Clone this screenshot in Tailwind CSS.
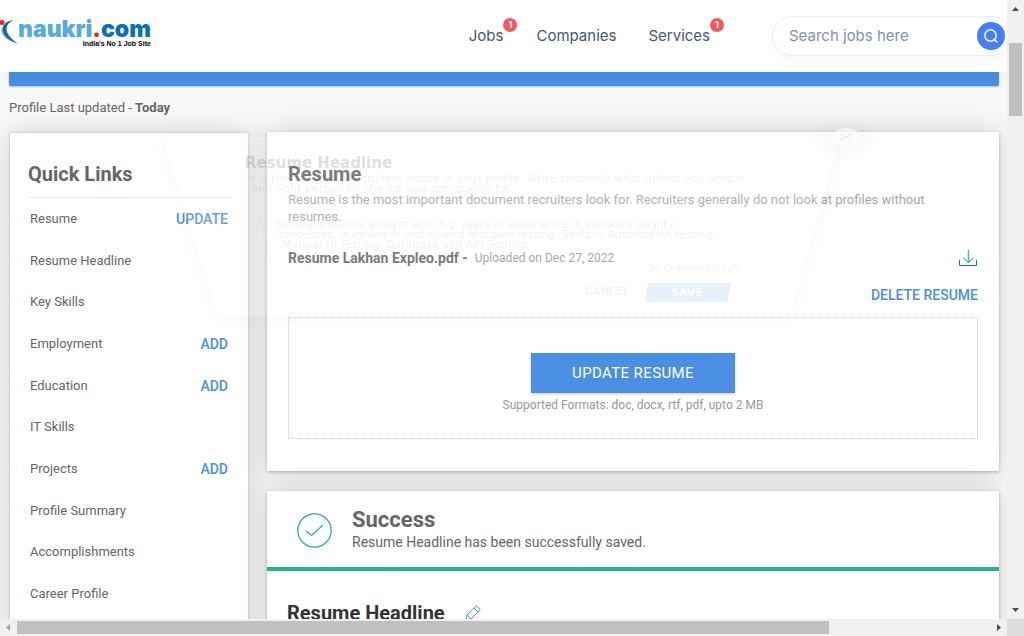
<!DOCTYPE html>
<html lang="en">
<head>
<meta charset="utf-8">
<meta name="viewport" content="width=device-width, initial-scale=1">
<title>Profile | Naukri.com</title>
<script src="https://cdn.jsdelivr.net/npm/@tailwindcss/browser@4"></script>
</head>
<body class="h-screen overflow-hidden bg-[#f8f8f8] font-['Roboto',sans-serif] text-[13px] text-[#666]">
<div class="grid h-screen grid-cols-[minmax(0,1fr)_17px] grid-rows-[minmax(0,1fr)_17px]">

  <div class="relative flex min-w-0 flex-col overflow-hidden">
    <header class="relative z-10 flex h-[72px] shrink-0 items-center bg-white shadow-[0_6px_12px_rgba(30,10,58,0.04)]">
      <a href="#" class="flex h-[72px] items-start pt-[19px]" aria-label="naukri.com home">
        <svg class="h-[27px] w-[18px] shrink-0" viewBox="0 0 18 27" aria-hidden="true">
          <path d="M14 1C6 2 1.500 6 2.500 12C4 18 10 22 18 25C12 20 7 16 6.500 11C6.200 6 9 3 14 1Z" fill="#1467b3"/>
          <path d="M1.500 9C1 15 5 20 12 22.500C6 19 3 15 2.500 9Z" fill="#58a9dc"/>
          <circle cx="2" cy="3.500" r="2.500" fill="#e8222c"/>
        </svg>
        <span class="flex flex-col">
          <span class="font-['Inter',sans-serif] text-[23px] leading-[21px] font-black text-[#58aadf]">naukri<span class="text-[#ee1c25]">.</span><span class="text-[#0a70bd]">com</span></span>
          <span class="text-right font-['Liberation_Sans',sans-serif] text-[7px] leading-[8px] font-bold text-black">India's No 1 Job Site</span>
        </span>
      </a>
      <nav class="ml-auto flex shrink-0 gap-[32px] font-['Inter',sans-serif] text-[15px] leading-5 text-[#475578]">
        <a href="#" class="relative mr-px">Jobs<span class="absolute -top-2 left-full flex size-[14px] items-center justify-center rounded-full bg-[#f05a5e] text-[9px] font-bold text-white">1</span></a>
        <a href="#">Companies</a>
        <a href="#" class="relative">Services<span class="absolute -top-2 left-full flex size-[14px] items-center justify-center rounded-full bg-[#f05a5e] text-[9px] font-bold text-white">1</span></a>
      </nav>
      <form class="-mr-[4px] ml-[62px] flex h-[40px] w-[239px] shrink-0 items-center rounded-full border border-[#e7edf5] bg-white pr-[5px] pl-4 shadow-[0_6px_12px_rgba(30,10,138,0.03)]">
        <input type="text" aria-label="Search jobs" placeholder="Search jobs here" class="min-w-0 flex-1 font-['Inter',sans-serif] text-[15px] text-[#475578] outline-none placeholder:text-[#8292b4]">
        <button type="button" aria-label="Search" class="flex size-[28px] items-center justify-center rounded-full bg-[#457eff]">
          <svg class="size-[16px]" viewBox="0 0 16 16" fill="none" stroke="#fff" stroke-width="1.500" stroke-linecap="round" aria-hidden="true"><circle cx="7.500" cy="7.500" r="5.700"/><path d="M11 11.500L14 14"/></svg>
        </button>
      </form>
    </header>

    <main class="relative flex min-h-0 flex-1 flex-col pr-2 pl-[9px]">
      <div class="h-[14px] shrink-0 rounded-b-[2px] bg-[#4a90e2] shadow-[0_1px_2px_rgba(0,0,0,0.25)]"></div>
      <p class="mt-3 mb-[14px] leading-5">Profile Last updated - <b class="font-bold">Today</b></p>

      <div class="flex shrink-0 items-stretch gap-[19px] pl-px">
        <aside class="mt-px w-[238px] shrink-0 rounded-[2px] bg-white px-[18px] pt-[27px] shadow-[0_0_28px_rgba(0,0,0,0.16),0_0_3px_rgba(0,0,0,0.2)]">
          <h2 class="text-[20px] leading-7 font-bold">Quick Links</h2>
          <ul class="mt-[9px] grid h-[418px] auto-rows-fr border-t border-[#e9e9e9] px-[2px] leading-5">
            <li class="flex items-center justify-between"><a href="#">Resume</a><a href="#" class="text-[14px] font-medium text-[#4a90e2]">UPDATE</a></li>
            <li class="flex items-center justify-between"><a href="#">Resume Headline</a></li>
            <li class="flex items-center justify-between"><a href="#">Key Skills</a></li>
            <li class="flex items-center justify-between"><a href="#">Employment</a><a href="#" class="text-[14px] font-medium text-[#4a90e2]">ADD</a></li>
            <li class="flex items-center justify-between"><a href="#">Education</a><a href="#" class="text-[14px] font-medium text-[#4a90e2]">ADD</a></li>
            <li class="flex items-center justify-between"><a href="#">IT Skills</a></li>
            <li class="flex items-center justify-between"><a href="#">Projects</a><a href="#" class="text-[14px] font-medium text-[#4a90e2]">ADD</a></li>
            <li class="flex items-center justify-between"><a href="#">Profile Summary</a></li>
            <li class="flex items-center justify-between"><a href="#">Accomplishments</a></li>
            <li class="flex items-center justify-between"><a href="#">Career Profile</a></li>
          </ul>
        </aside>

        <div class="flex min-w-0 flex-1 flex-col gap-5">
          <section class="bg-white px-[21px] pt-7 pb-8 shadow-[0_0_28px_rgba(0,0,0,0.16),0_1px_3px_rgba(0,0,0,0.25)]">
            <h2 class="text-[20px] leading-7 font-bold">Resume</h2>
            <p class="mt-[3px] text-[13px] leading-[17px] text-[#a6a6a6]">Resume is the most important document recruiters look for. Recruiters generally do not look at profiles without resumes.</p>
            <div class="mt-[23px] flex items-center justify-between leading-5">
              <p class="flex items-center gap-[7px]"><b class="text-[14px] font-bold">Resume Lakhan Expleo.pdf -</b><span class="text-[12px] text-[#999]">Uploaded on Dec 27, 2022</span></p>
              <button type="button" aria-label="Download resume">
                <svg class="h-[18px] w-[20px]" viewBox="0 0 20 18" fill="none" aria-hidden="true"><path d="M10.500 1V13" stroke="#52a9e2" stroke-width="1.500"/><path d="M5.500 9L10.500 13.500L15.500 9M1.500 11V16.500H18.500V11" stroke="#1274ba"/></svg>
              </button>
            </div>
            <div class="mt-[17px] flex justify-end"><a href="#" class="text-[14px] leading-5 font-medium text-[#4a90e2]">DELETE RESUME</a></div>
            <div class="mt-[12px] flex flex-col items-center border border-dotted border-[#d2d2d2] pt-[35px] pb-[23px]">
              <button type="button" class="h-[40px] w-[204px] bg-[#4a90e2] text-[15px] font-normal tracking-wide text-white shadow-[0_1px_3px_rgba(0,0,0,0.2)]">UPDATE RESUME</button>
              <p class="mt-[2px] text-[12px] leading-5 text-[#999]">Supported Formats: doc, docx, rtf, pdf, upto 2 MB</p>
            </div>
          </section>

          <section class="bg-white pb-8 shadow-[0_0_28px_rgba(0,0,0,0.16),0_1px_3px_rgba(0,0,0,0.25)]">
            <div class="flex h-[80px] items-center gap-5 border-b-4 border-[#2dae93] pt-[2px] pl-[30px]" role="status">
              <svg class="size-[35px]" viewBox="0 0 35 35" fill="none" stroke="#2dae93" aria-hidden="true"><circle cx="17.500" cy="17.500" r="16.700" stroke-width="1.300"/><path d="M9 18L14.500 22.500L26 12" stroke-width="1.200"/></svg>
              <div>
                <h3 class="text-[22px] leading-6 font-bold">Success</h3>
                <p class="text-[14px] leading-5">Resume Headline has been successfully saved.</p>
              </div>
            </div>
            <div class="mt-7 flex items-center gap-5 pl-5">
              <h2 class="text-[20px] leading-7 font-bold text-[#333]">Resume Headline</h2>
              <button type="button" aria-label="Edit resume headline">
                <svg class="size-[16px]" viewBox="0 0 16 16" fill="none" stroke="#4a90e2" aria-hidden="true"><path d="M1 15L2 10L11 1.200Q11.500 .800 12 1.200L14.800 4Q15.200 4.500 14.800 5L6 14ZM9 3L13 7M2 10L6 14"/></svg>
              </button>
            </div>
          </section>
        </div>
      </div>
    </main>

    <!-- Headline editor, fading out as it tips away -->
    <div class="pointer-events-none absolute top-[120px] left-[140px] z-20 h-[215px] w-[740px] font-['DejaVu_Sans',sans-serif] text-[11px] leading-[10px] text-[#555]/10" aria-hidden="true">
      <svg class="absolute inset-0 size-full" viewBox="0 0 740 215" fill="none">
        <defs>
          <filter id="soft" x="-10%" y="-20%" width="120%" height="140%"><feGaussianBlur stdDeviation="8"/></filter>
          <filter id="softer" x="-100%" y="-150%" width="300%" height="400%"><feGaussianBlur stdDeviation="8"/></filter>
          <mask id="outside"><path d="M0 0H740V215H0Z" fill="#fff"/><path d="M22 17H700L650 197H78Z" fill="#000"/></mask>
        </defs>
        <g mask="url(#outside)"><path d="M22 17H700L650 197H78Z" fill="#000" opacity=".035" filter="url(#soft)"/></g>
        <path d="M22 17H700L650 197H78Z" fill="#fff" opacity=".15"/>
        <path d="M119 92L130 142H606L618 92" stroke="#000" stroke-opacity=".02"/>
        <ellipse cx="706" cy="17" rx="24" ry="15" fill="#000" opacity=".03" filter="url(#softer)"/>
        <ellipse cx="706" cy="17" rx="15" ry="9" fill="#fff" opacity=".6"/>
        <path d="M700 14L712 20M712 14L700 20" stroke="#000" stroke-opacity=".08"/>
        <path d="M508 163H591L587 182H505Z" fill="#e8f0fc"/>
      </svg>
      <h2 class="absolute top-[35px] left-[105px] text-[15px] leading-4 font-bold whitespace-nowrap text-[#555]/20">Resume Headline</h2>
      <p class="absolute top-[54px] left-[108px] whitespace-nowrap">It is the first thing recruiters notice in your profile. Write concisely what makes you unique<br>&nbsp;and right person for the job you are looking for.</p>
      <p class="absolute top-[100px] left-[135px] whitespace-nowrap">Software quality analyst with 3.2 years of experience in software quality<br>&nbsp;processes, involved in end-to-end features testing. Skills in Automation testing,<br>&nbsp;&nbsp;Manual UI Testing, Database and API Testing.</p>
      <p class="absolute top-[143px] left-[509px] text-[9px] whitespace-nowrap">50 Character(s) Left</p>
      <span class="absolute top-[167px] left-[445px] text-[#4a90e2]/15">CANCEL</span>
      <span class="absolute top-[168px] left-[531px] font-bold text-white">SAVE</span>
    </div>
  </div>

  <div class="flex flex-col items-center justify-between bg-[#f0f0f0] py-[6px]" aria-hidden="true">
    <svg class="h-[5px] w-[7px]" viewBox="0 0 7 5"><path d="M0 5L3.500 1L7 5Z" fill="#4d4d4d"/></svg>
    <div class="mt-[32px] h-[73px] w-[13px] bg-[#c0c0c0]"></div>
    <svg class="mt-auto h-[5px] w-[7px]" viewBox="0 0 7 5"><path d="M0 0L3.500 4L7 0Z" fill="#4d4d4d"/></svg>
  </div>
  <div class="flex items-center bg-[#f0f0f0] px-[6px]" aria-hidden="true">
    <svg class="h-[7px] w-[4px]" viewBox="0 0 4 7"><path d="M4 0L0 3.500L4 7Z" fill="#a3a3a3"/></svg>
    <div class="ml-[7px] h-[13px] w-[calc(82%-4px)] bg-[#c0c0c0]"></div>
    <svg class="ml-auto h-[7px] w-[4px]" viewBox="0 0 4 7"><path d="M0 0L4 3.500L0 7Z" fill="#4d4d4d"/></svg>
  </div>
  <div class="bg-[#dcdcdc]" aria-hidden="true"></div>
</div>
</body>
</html>
